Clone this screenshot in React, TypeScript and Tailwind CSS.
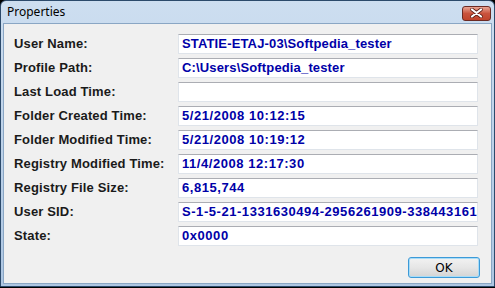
const rows: [string, string, boolean][] = [
  ['User Name:', 'STATIE-ETAJ-03\\Softpedia_tester', false],
  ['Profile Path:', 'C:\\Users\\Softpedia_tester', false],
  ['Last Load Time:', '', false],
  ['Folder Created Time:', '5/21/2008 10:12:15', true],
  ['Folder Modified Time:', '5/21/2008 10:19:12', true],
  ['Registry Modified Time:', '11/4/2008 12:17:30', true],
  ['Registry File Size:', '6,815,744', true],
  ['User SID:', 'S-1-5-21-1331630494-2956261909-338443161', true],
  ['State:', '0x0000', true],
];

function CloseButton() {
  return (
    <div className="w-[29px] h-[15px] rounded-[3px] border border-[#6b2a23] bg-gradient-to-b from-[#e8a493] via-[#c9533d] to-[#c0442b] flex items-center justify-center">
      <svg width="13" height="10" viewBox="0 0 13 10">
        <path d="M2 1.5 L11 8.5 M11 1.5 L2 8.5" stroke="#5a1e16" strokeWidth="3.6" strokeLinecap="round" />
        <path d="M2 1.5 L11 8.5 M11 1.5 L2 8.5" stroke="#ffffff" strokeWidth="2.2" strokeLinecap="round" />
      </svg>
    </div>
  );
}

export default function App() {
  return (
    <div className="w-[495px] h-[288px] bg-black overflow-hidden">
      <div className="w-[495px] h-[287px] flex flex-col rounded-t-[6px] border border-[#2c4a6b] bg-gradient-to-b from-[#cddef0] to-[#adc6e2] overflow-hidden">
        {/* title bar */}
        <div className="h-[22px] flex items-center justify-between pl-[6px] pr-[3px] shrink-0">
          <span className="text-[12px] text-black font-['Noto_Sans',sans-serif] leading-none">Properties</span>
          <div className="mt-[2px]">
            <CloseButton />
          </div>
        </div>

        {/* client area */}
        <div className="flex-1 flex mx-[2px] mb-[2px] border border-[#8aa6c4] bg-[#f0f0f0]">
          <div className="flex-1 flex flex-col pt-[10px] pl-[10px] pr-[11px] font-['Liberation_Sans',sans-serif]">
            <div className="flex flex-col gap-[4px]">
              {rows.map(([label, value, numeric]) => (
                <div key={label} className="flex items-center h-[20px]">
                  <span className="w-[164px] text-[13px] font-bold text-[#1a1a1a] tracking-[0.15px]">{label}</span>
                  <div
                    className={
                      numeric
                        ? 'w-[300px] h-[20px] bg-white border border-[#dfe4ea] border-t-[#abadb3] pl-[3px] flex items-center text-[13px] font-bold text-[#0000a8] tracking-[0.55px] overflow-hidden whitespace-nowrap'
                        : 'w-[300px] h-[20px] bg-white border border-[#dfe4ea] border-t-[#abadb3] pl-[3px] flex items-center text-[13px] font-bold text-[#0000a8] tracking-[0.15px] overflow-hidden whitespace-nowrap'
                    }
                  >
                    {value}
                  </div>
                </div>
              ))}
            </div>
            <div className="flex justify-end mt-[11px]">
              <button className="w-[72px] h-[21px] rounded-[3px] border border-[#3c9ad8] bg-gradient-to-b from-[#f2f2f2] via-[#e6e6e6] to-[#d4d4d4] shadow-[inset_0_0_0_1px_#a8dcf7] text-[12px] text-black font-['DejaVu_Sans',sans-serif] leading-none">
                OK
              </button>
            </div>
          </div>
        </div>
      </div>
    </div>
  );
}
